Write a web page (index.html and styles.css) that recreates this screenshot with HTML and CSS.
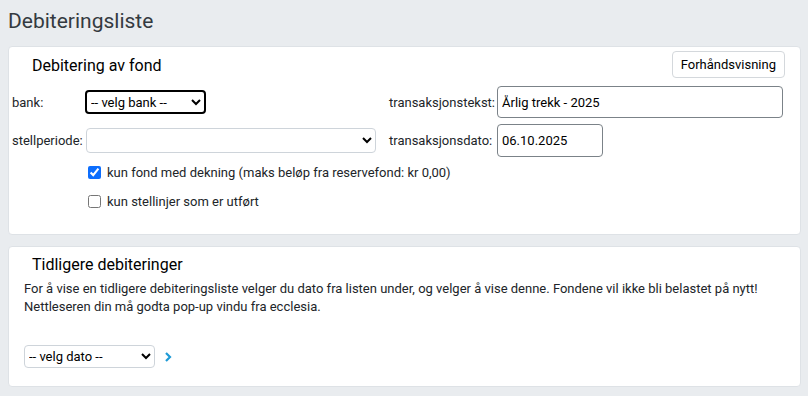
FILE: index.html
```html
<!DOCTYPE html>
<html lang="no">
<head>
    <meta charset="UTF-8">
    <title>Debiteringsliste</title>
    <link rel="stylesheet" href="styles.css">
</head>
<body>
    <h1 class="page-title">Debiteringsliste</h1>

    <div class="card card-debit">
        <div class="card-head">
            <h2>Debitering av fond</h2>
            <button type="button" class="btn-preview">Forhåndsvisning</button>
        </div>
        <form class="debit-form">
            <label class="lbl" for="bank">bank:</label>
            <div class="field">
                <select id="bank" class="sel sel-bank">
                    <option>-- velg bank --</option>
                </select>
            </div>
            <label class="lbl lbl-right" for="tekst">transaksjonstekst:</label>
            <div class="field">
                <input id="tekst" class="inp inp-text" type="text" value="Årlig trekk - 2025">
            </div>

            <label class="lbl" for="periode">stellperiode:</label>
            <div class="field">
                <select id="periode" class="sel sel-period">
                    <option></option>
                </select>
            </div>
            <label class="lbl lbl-right" for="dato">transaksjonsdato:</label>
            <div class="field">
                <input id="dato" class="inp inp-date" type="text" value="06.10.2025">
            </div>

            <div class="checks">
                <label class="check"><input type="checkbox" checked> kun fond med dekning (maks beløp fra reservefond: kr 0,00)</label>
                <label class="check"><input type="checkbox"> kun stellinjer som er utført</label>
            </div>
        </form>
    </div>

    <div class="card card-history">
        <h2>Tidligere debiteringer</h2>
        <p>For å vise en tidligere debiteringsliste velger du dato fra listen under, og velger å vise denne. Fondene vil ikke bli belastet på nytt!<br>
        Nettleseren din må godta pop-up vindu fra ecclesia.</p>
        <div class="history-pick">
            <select class="sel sel-date">
                <option>-- velg dato --</option>
            </select>
            <svg class="go" width="8" height="10" viewBox="0 0 8 10"><path d="M2 1 L6 5 L2 9" fill="none" stroke="#1e9ad6" stroke-width="2.2"/></svg>
        </div>
    </div>
</body>
</html>
```

FILE: styles.css
```css
body {
    margin: 0;
    padding: 0 7px 0 8px;
    background-color: #e9ecef;
    font-family: Roboto, "Liberation Sans", Arial, sans-serif;
    font-size: 13px;
    color: #212529;
}
.page-title {
    margin: 0;
    padding: 9px 0 12px 0;
    font-size: 21px;
    font-weight: 400;
    line-height: 25px;
    color: #343a40;
}
.card {
    background-color: #fff;
    border: 1px solid #dee2e6;
    border-radius: 4px;
}
.card h2 {
    margin: 0;
    font-size: 16px;
    font-weight: 400;
    line-height: 19px;
    color: #000;
}
.card-debit {
    height: 187px;
    padding: 0 15px 0 3px;
}
.card-head {
    display: flex;
    justify-content: space-between;
    align-items: flex-start;
    padding-top: 4px;
}
.card-head h2 {
    padding: 5px 0 0 20px;
}
.btn-preview {
    font-family: inherit;
    font-size: 13px;
    color: #000;
    background-color: #fff;
    border: 1px solid #d4d8dc;
    border-radius: 4px;
    height: 27px;
    padding: 0 8px;
}
.debit-form {
    display: grid;
    grid-template-columns: 73px 291px 121px 286px;
    align-items: center;
    margin-top: 5px;
}
.lbl-right {
    padding-left: 13px;
}
.field {
    display: flex;
    align-items: center;
    height: 38px;
}
.sel {
    font-family: inherit;
    font-size: 13px;
    background-color: #fff;
    color: #000;
    border-radius: 4px;
}
.sel-bank {
    width: 121px;
    height: 24px;
    border: 2px solid #000;
}
.sel-period {
    width: 291px;
    height: 25px;
    margin-left: 1px;
    border: 1px solid #ced4da;
}
.inp {
    font-family: inherit;
    font-size: 13px;
    color: #000;
    border: 1px solid #7b8288;
    border-radius: 4px;
    padding: 0 4px;
    box-sizing: border-box;
}
.inp-text {
    width: 286px;
    height: 32px;
}
.inp-date {
    width: 106px;
    height: 33px;
}
.checks {
    grid-column: 2 / 5;
    margin-top: -1px;
    padding: 0 0 0 3px;
}
.check {
    display: flex;
    align-items: center;
    height: 29px;
}
.check input {
    width: 13px;
    height: 13px;
    margin: 0 6px 0 0;
    accent-color: #0d6efd;
}
.card-history {
    margin-top: 11px;
    height: 139px;
    padding: 0 15px;
}
.card-history h2 {
    padding: 8px 0 0 8px;
}
.card-history p {
    margin: 6px 0 0 0;
    font-size: 13px;
    line-height: 18px;
}
.history-pick {
    display: flex;
    align-items: center;
    gap: 9px;
    margin-top: 29px;
}
.sel-date {
    width: 131px;
    height: 23px;
    border: 1px solid #ced4da;
    font-size: 13px;
}
.go {
    display: block;
}
```
